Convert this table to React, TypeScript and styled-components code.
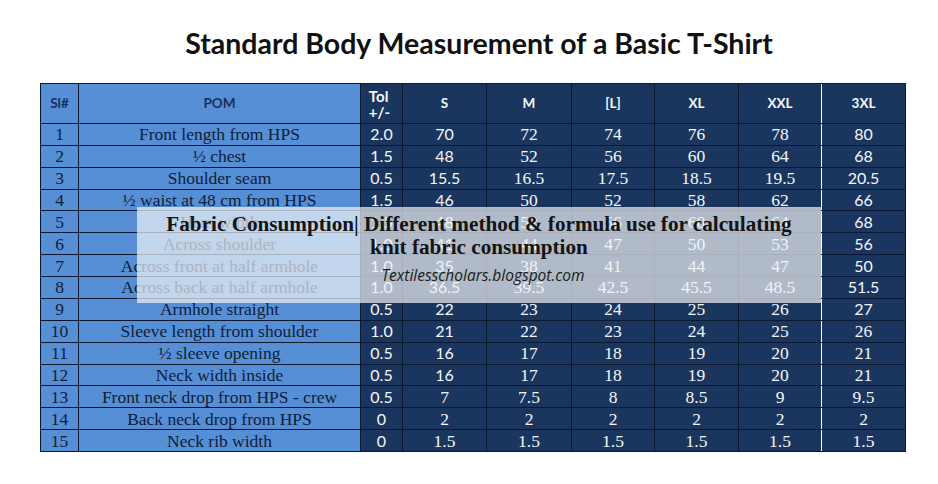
import React from "react";
import styled, { createGlobalStyle } from "styled-components";

const Global = createGlobalStyle`
  html, body { margin: 0; padding: 0; background: #ffffff; }
  body { width: 938px; height: 484px; overflow: hidden; }
`;

const Page = styled.div`
  width: 938px;
  height: 484px;
  background: #ffffff;
  display: flex;
  flex-direction: column;
`;

const Title = styled.h1`
  margin: 0;
  padding: 27px 0 0 20px;
  height: 55px;
  box-sizing: border-box;
  text-align: center;
  font-family: Lato, "Open Sans", sans-serif;
  font-weight: 700;
  font-size: 28.5px;
  line-height: 33px;
  color: #111111;
  white-space: nowrap;
`;

const TableWrap = styled.div`
  position: relative;
  margin: 28px 0 0 40px;
  width: 866px;
  height: 369px;
`;

const Grid = styled.div`
  box-sizing: border-box;
  width: 866px;
  height: 369px;
  padding: 1px;
  background: #0b1830;
  display: grid;
  grid-template-columns: 37px 281px 41px 83px 84px 82px 83px 82px 83px;
  grid-template-rows: 39px repeat(15, 1fr);
  gap: 1px;
`;

const Cell = styled.div<{ $light?: boolean; $sans?: boolean; $head?: boolean; $split?: boolean }>`
  display: flex;
  align-items: center;
  justify-content: center;
  text-align: center;
  background: ${(p) => (p.$light ? "#568fd6" : "#1b365e")};
  color: ${(p) => (p.$light ? (p.$head ? "#17305a" : "#0f1d38") : "#f4f6fa")};
  font-family: ${(p) =>
    p.$head || p.$sans ? 'Lato, "Open Sans", sans-serif' : '"Liberation Serif", "Times New Roman", serif'};
  font-weight: ${(p) => (p.$head ? 700 : 400)};
  font-size: ${(p) => (p.$head ? "13.5px" : p.$sans ? "16px" : "17.5px")};
  line-height: ${(p) => (p.$head ? "17px" : "18px")};
  white-space: nowrap;
  box-shadow: ${(p) => (p.$split ? "-1px 0 0 #ffffff" : "none")};
`;

const TolHead = styled.span`
  display: block;
  font-size: 15px;
  line-height: 16px;
  text-align: left;
  margin-left: -4px;
`;

const Overlay = styled.div`
  position: absolute;
  left: 97px;
  top: 124px;
  width: 684px;
  height: 96px;
  box-sizing: border-box;
  padding-top: 6px;
  background: rgba(240, 242, 245, 0.7);
  display: flex;
  flex-direction: column;
  align-items: center;
`;

const Headline = styled.div`
  font-family: "Liberation Serif", "Times New Roman", serif;
  font-weight: 700;
  font-size: 21.2px;
  line-height: 23px;
  color: #141414;
  text-align: center;
  width: 660px;
`;

const Blog = styled.div`
  margin-top: 6px;
  margin-left: 8px;
  font-family: "Open Sans", "Noto Sans", sans-serif;
  font-style: italic;
  font-size: 15.5px;
  line-height: 20px;
  color: #1a1a1a;
`;

const heads = ["Sl#", "POM", "Tol +/-", "S", "M", "[L]", "XL", "XXL", "3XL"];

const rows: string[][] = [
  ["1", "Front length from HPS", "2.0", "70", "72", "74", "76", "78", "80"],
  ["2", "½ chest", "1.5", "48", "52", "56", "60", "64", "68"],
  ["3", "Shoulder seam", "0.5", "15.5", "16.5", "17.5", "18.5", "19.5", "20.5"],
  ["4", "½ waist at 48 cm from HPS", "1.5", "46", "50", "52", "58", "62", "66"],
  ["5", "Hem width", "1.5", "48", "52", "56", "60", "64", "68"],
  ["6", "Across shoulder", "1.0", "41", "44", "47", "50", "53", "56"],
  ["7", "Across front at half armhole", "1.0", "35", "38", "41", "44", "47", "50"],
  ["8", "Across back at half armhole", "1.0", "36.5", "39.5", "42.5", "45.5", "48.5", "51.5"],
  ["9", "Armhole straight", "0.5", "22", "23", "24", "25", "26", "27"],
  ["10", "Sleeve length from shoulder", "1.0", "21", "22", "23", "24", "25", "26"],
  ["11", "½ sleeve opening", "0.5", "16", "17", "18", "19", "20", "21"],
  ["12", "Neck width inside", "0.5", "16", "17", "18", "19", "20", "21"],
  ["13", "Front neck drop from HPS - crew", "0.5", "7", "7.5", "8", "8.5", "9", "9.5"],
  ["14", "Back neck drop from HPS", "0", "2", "2", "2", "2", "2", "2"],
  ["15", "Neck rib width", "0", "1.5", "1.5", "1.5", "1.5", "1.5", "1.5"],
];

const isSans = (r: number, c: number) => {
  if (c === 2) return true;
  if (c === 3) return r < 12;
  if (c === 8) return r < 9;
  return false;
};

export default function App() {
  return (
    <Page>
      <Global />
      <Title>Standard Body Measurement of a Basic T-Shirt</Title>
      <TableWrap>
        <Grid>
          {heads.map((h, c) => (
            <Cell key={"h" + c} $head $light={c < 2} $split={c === 8}>
              {c === 2 ? (
                <TolHead>
                  Tol
                  <br />
                  +/-
                </TolHead>
              ) : (
                h
              )}
            </Cell>
          ))}
          {rows.map((row, r) =>
            row.map((v, c) => (
              <Cell key={r + "-" + c} $light={c < 2} $sans={isSans(r, c)} $split={c === 8}>
                {v}
              </Cell>
            ))
          )}
        </Grid>
        <Overlay>
          <Headline>
            Fabric Consumption| Different method &amp; formula use for calculating knit fabric consumption
          </Headline>
          <Blog>Textilesscholars.blogspot.com</Blog>
        </Overlay>
      </TableWrap>
    </Page>
  );
}
